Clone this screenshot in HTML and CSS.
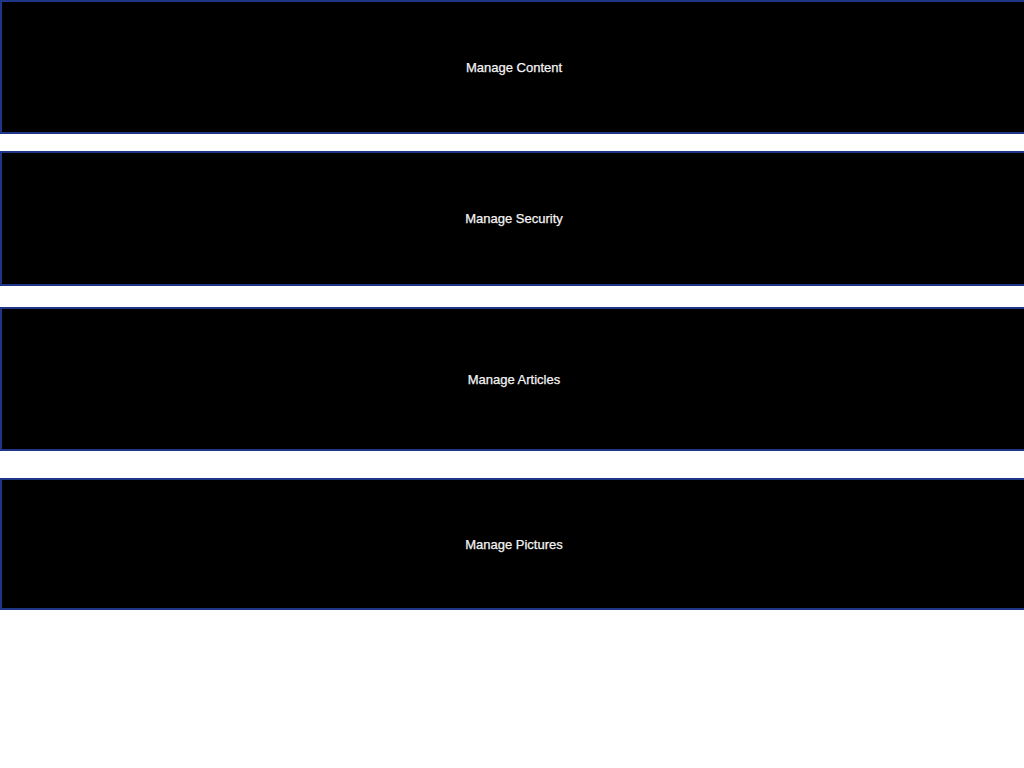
FILE: index.html
```html
<!DOCTYPE html>
<html>
<head>
<meta charset="utf-8">
<link rel="stylesheet" href="styles.css">
</head>
<body>
<div class="menu">
  <div class="tile tile-content">Manage Content</div>
  <div class="tile tile-security">Manage Security</div>
  <div class="tile tile-articles">Manage Articles</div>
  <div class="tile tile-pictures">Manage Pictures</div>
</div>
</body>
</html>
```
FILE: styles.css
```css
html, body {
  margin: 0;
  padding: 0;
  background: #ffffff;
  overflow: hidden;
}
.menu {
  display: flex;
  flex-direction: column;
  width: 1024px;
}
.tile {
  box-sizing: content-box;
  width: 1024px;
  background: #000000;
  border: 2px solid #1f3587;
  color: #f4f4f4;
  font-family: "Liberation Sans", Arial, sans-serif;
  font-size: 13px;
  -webkit-text-stroke: 0.25px #f4f4f4;
  display: flex;
  align-items: center;
  justify-content: center;
}
.tile-content { height: 130px; }
.tile-security { height: 131px; margin-top: 17px; }
.tile-articles { height: 140px; margin-top: 21px; }
.tile-pictures { height: 128px; margin-top: 27px; }
```
